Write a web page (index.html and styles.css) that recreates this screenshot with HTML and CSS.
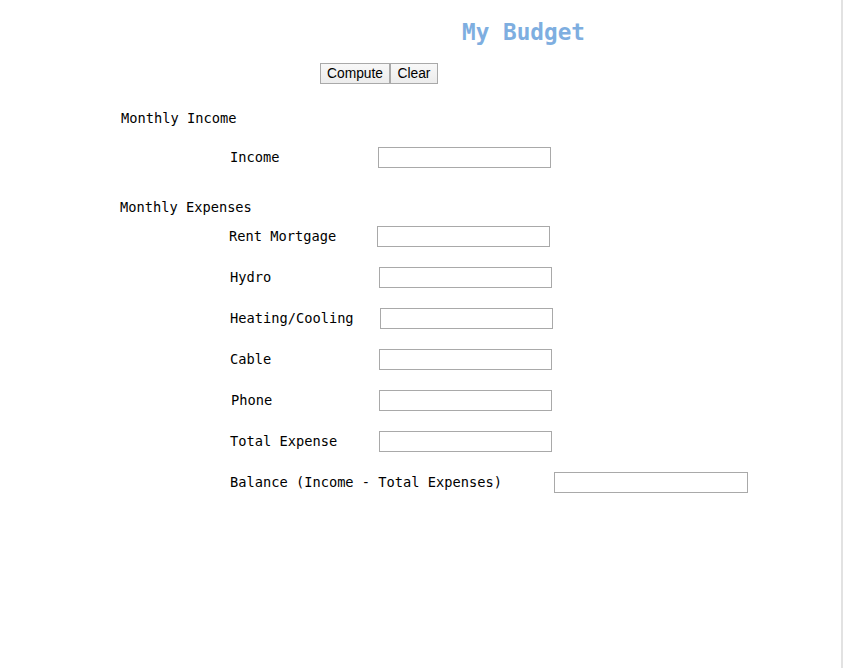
FILE: index.html
```html
<!DOCTYPE html>
<html>
<head>
<meta charset="utf-8">
<link rel="stylesheet" href="styles.css">
</head>
<body>
<div class="page">
  <h1 class="title">My Budget</h1>
  <div class="actions">
    <button class="btn">Compute</button><button class="btn">Clear</button>
  </div>
  <div class="section-title first">Monthly Income</div>
  <div class="row row-income">
    <label class="lbl">Income</label>
    <input class="field" type="text">
  </div>
  <div class="section-title second">Monthly Expenses</div>
  <div class="rows">
    <div class="row"><label class="lbl l-1">Rent Mortgage</label><input class="field" type="text"></div>
    <div class="row"><label class="lbl">Hydro</label><input class="field s1" type="text"></div>
    <div class="row"><label class="lbl">Heating/Cooling</label><input class="field s2" type="text"></div>
    <div class="row"><label class="lbl">Cable</label><input class="field s1" type="text"></div>
    <div class="row"><label class="lbl l1">Phone</label><input class="field s1" type="text"></div>
    <div class="row"><label class="lbl">Total Expense</label><input class="field s1" type="text"></div>
    <div class="row"><label class="lbl wide">Balance (Income - Total Expenses)</label><input class="field big" type="text"></div>
  </div>
</div>
</body>
</html>
```
FILE: styles.css
```css
html, body {
  margin: 0;
  padding: 0;
  background: #fff;
}
body {
  font-family: "DejaVu Sans Mono", "Liberation Mono", monospace;
  font-size: 13.7px;
  color: #000;
  border-right: 2px solid #e2e2e2;
  min-height: 668px;
  box-sizing: border-box;
}
.page {
  display: flex;
  flex-direction: column;
}
.title {
  margin: 0;
  padding: 19px 0 0 206px;
  text-align: center;
  font-family: "DejaVu Sans Mono", monospace;
  font-weight: bold;
  font-size: 22.7px;
  line-height: 27px;
  color: #7eaee0;
}
.actions {
  margin-top: 17px;
  padding-left: 320px;
  display: flex;
}
.btn {
  font-family: Arial, "Liberation Sans", sans-serif;
  font-size: 13.8px;
  height: 21px;
  padding: 0 6px;
  margin: 0;
  background: linear-gradient(#f8f8f8, #ececec);
  border: 1px solid #a9a9a9;
  border-radius: 0;
  color: #000;
  line-height: 19px;
}
.btn + .btn { padding: 0 6.5px; }
.section-title {
  line-height: 17px;
  padding-left: 121px;
}
.section-title.first { margin-top: 25.5px; }
.section-title.second { margin-top: 30.5px; padding-left: 120px; }
.row {
  display: flex;
  align-items: center;
  padding-left: 229px;
  height: 21px;
}
.row-income { margin-top: 20.5px; }
.rows {
  margin-top: 10.5px;
  display: flex;
  flex-direction: column;
  gap: 20px;
}
.lbl {
  width: 148px;
  padding-left: 1px;
  line-height: 17px;
}
.lbl.l-1 { padding-left: 0; width: 148px; }
.lbl.l1 { padding-left: 2px; width: 147px; }
.lbl.wide { width: 324px; }
.field {
  width: 173px;
  height: 21px;
  box-sizing: border-box;
  border: 1px solid #a9a9a9;
  margin: 0;
  padding: 0;
  background: #fff;
}
.field.big { width: 194px; }
.s1 { margin-left: 1px; }
.s2 { margin-left: 2px; }
```
